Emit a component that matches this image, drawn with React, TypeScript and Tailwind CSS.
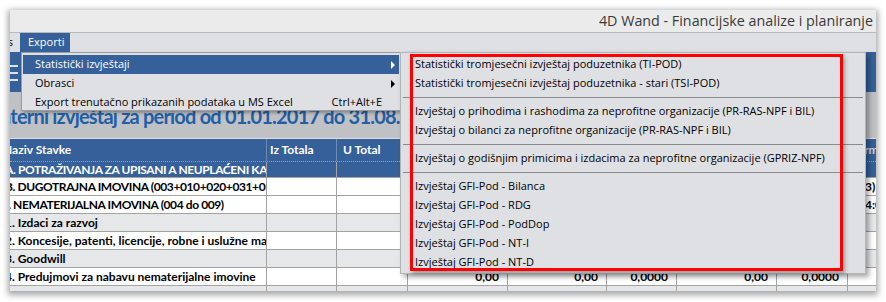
import React from 'react';

const subItems: (string | null)[] = [
  'Statistički tromjesečni izvještaj poduzetnika (TI-POD)',
  'Statistički tromjesečni izvještaj poduzetnika - stari (TSI-POD)',
  null,
  'Izvještaj o prihodima i rashodima za neprofitne organizacije (PR-RAS-NPF i BIL)',
  'Izvještaj o bilanci za neprofitne organizacije (PR-RAS-NPF i BIL)',
  null,
  'Izvještaj o godišnjim primicima i izdacima za neprofitne organizacije (GPRIZ-NPF)',
  null,
  'Izvještaj GFI-Pod - Bilanca',
  'Izvještaj GFI-Pod - RDG',
  'Izvještaj GFI-Pod - PodDop',
  'Izvještaj GFI-Pod - NT-I',
  'Izvještaj GFI-Pod - NT-D',
];

type Row = { name: string; bg: string; text: string; h: string; caps?: boolean; vals?: boolean; last?: string };

const rows: Row[] = [
  { name: 'A. POTRAŽIVANJA ZA UPISANI A NEUPLAĆENI KAPITAL', bg: 'bg-[#35609a]', text: 'text-white', h: 'h-[16px]', caps: true },
  { name: 'B. DUGOTRAJNA IMOVINA (003+010+020+031+036)', bg: 'bg-white', text: 'text-black', h: 'h-[18px]', caps: true, last: '3)' },
  { name: 'I. NEMATERIJALNA IMOVINA (004 do 009)', bg: 'bg-white', text: 'text-black', h: 'h-[18px]', caps: true, last: '4:009)' },
  { name: '1. Izdaci za razvoj', bg: 'bg-[#e6e7e9]', text: 'text-black', h: 'h-[18px]' },
  { name: '2. Koncesije, patenti, licencije, robne i uslužne marke', bg: 'bg-white', text: 'text-black', h: 'h-[18px]' },
  { name: '3. Goodwill', bg: 'bg-[#e6e7e9]', text: 'text-black', h: 'h-[18px]' },
  { name: '4. Predujmovi za nabavu nematerijalne imovine', bg: 'bg-white', text: 'text-black', h: 'h-[18px]', vals: true },
  { name: '', bg: 'bg-[#e6e7e9]', text: 'text-black', h: 'h-[18px]' },
];

const cols = 'grid grid-cols-[257px_70px_71px_100px_99px_70px_100px_71px_1fr]';
const vals = ['0,00', '0,00', '0,0000', '0,00', '0,0000'];

function Arrow({ color }: { color: string }) {
  return <span className={`w-0 h-0 border-y-[4px] border-y-transparent border-l-[4px] ${color}`} />;
}

export default function App() {
  return (
    <div className="w-[886px] h-[302px] bg-white pt-[10px] pl-[10px]">
      <div className="relative w-[866px] h-[281px] overflow-hidden bg-[#bfc1c4] shadow-[0_2px_6px_2px_rgba(0,0,0,0.35)] font-['Lato',sans-serif]">
        {/* title bar */}
        <div className="h-[23px] bg-[#ebebeb] border-b border-[#b9b9b9] flex items-center justify-end pr-[3px] font-['Open_Sans',sans-serif] text-[14.3px] text-[#3a3a3a]">
          4D Wand - Financijske analize i planiranje
        </div>

        {/* menu bar */}
        <div className="h-[19px] bg-[#dfe0e3] flex font-['Open_Sans',sans-serif] text-[11px]">
          <div className="w-[10px] flex justify-end items-center pr-[7px] text-black">s</div>
          <div className="w-[50px] bg-[#35609a] text-white flex items-center pl-[8px]">Exporti</div>
        </div>

        {/* toolbar */}
        <div className="h-[40px] bg-[#35609a] pt-[13px] flex flex-col gap-[5px]">
          <span className="block w-[8px] h-[2px] bg-[#dbe3ee]" />
          <span className="block w-[8px] h-[2px] bg-[#dbe3ee]" />
          <span className="block w-[8px] h-[2px] bg-[#dbe3ee]" />
        </div>

        {/* report title */}
        <div className="h-[46px] pt-[13px] whitespace-nowrap overflow-hidden">
          <div className="text-[20px] leading-[22px] font-bold tracking-[-0.8px] text-[#1f5fa6] -ml-[15px]">
            Interni izvještaj za period od 01.01.2017 do 31.08.2017
          </div>
        </div>

        {/* table */}
        <div className="border-t border-[#dcdde0] text-[12px] font-bold">
          <div className={`${cols} h-[23px] bg-[#35609a] text-white border-b border-dotted border-[#d8923a]`}>
            <div className="border-r border-[#6d8cb5] flex items-center overflow-hidden"><span className="-ml-[7px]">Naziv Stavke</span></div>
            <div className="border-r border-[#6d8cb5] flex items-center pl-[3px]">Iz Totala</div>
            <div className="border-r border-[#6d8cb5] flex items-center pl-[6px]">U Total</div>
            <div className="border-r border-[#6d8cb5]" />
            <div className="border-r border-[#6d8cb5]" />
            <div className="border-r border-[#6d8cb5]" />
            <div className="border-r border-[#6d8cb5]" />
            <div className="border-r border-[#6d8cb5]" />
            <div className="flex items-center pl-[3px] text-[#cfd3da] overflow-hidden whitespace-nowrap">Formula</div>
          </div>
          {rows.map((r, i) => (
            <div key={i} className={`${cols} ${r.h} ${r.bg} ${r.text} border-b border-[#a3a3a3]`}>
              <div className="border-r border-[#a3a3a3] flex items-center overflow-hidden whitespace-nowrap">
                <span className={r.caps ? '-ml-[5px] tracking-[-0.4px]' : '-ml-[5px]'}>{r.name}</span>
              </div>
              <div className="border-r border-[#a3a3a3]" />
              <div className="border-r border-[#a3a3a3]" />
              {[0, 1, 2, 3, 4].map((j) => (
                <div key={j} className="border-r border-[#a3a3a3] flex items-center justify-end pr-[8px]">
                  {r.vals ? vals[j] : ''}
                </div>
              ))}
              <div className="flex items-center pl-[17px] overflow-hidden whitespace-nowrap">{r.last ?? ''}</div>
            </div>
          ))}
        </div>

        {/* Exporti dropdown */}
        <div className="absolute left-[11px] top-[42px] w-[380px] h-[59px] bg-[#dfe0e4] border border-[#9c9c9c] shadow-[2px_2px_3px_rgba(0,0,0,0.3)] pt-[2px] px-[1px] font-['Open_Sans',sans-serif] text-[11px] text-black">
          <div className="h-[19px] bg-[#35609a] text-white flex items-center justify-between pl-[12px] pr-[4px]">
            <span>Statistički izvještaji</span>
            <Arrow color="border-l-white" />
          </div>
          <div className="h-[19px] flex items-center justify-between pl-[12px] pr-[4px]">
            <span>Obrasci</span>
            <Arrow color="border-l-black" />
          </div>
          <div className="h-[18px] flex items-center justify-between pl-[12px] pr-[17px]">
            <span>Export trenutačno prikazanih podataka u MS Excel</span>
            <span>Ctrl+Alt+E</span>
          </div>
        </div>

        {/* submenu */}
        <div className="absolute left-[390px] top-[42px] w-[466px] h-[222px] bg-[#dfe0e4] border border-[#b4b4b4] shadow-[3px_3px_5px_rgba(0,0,0,0.35)] pt-[2px] font-['Open_Sans',sans-serif] text-[11px] text-black">
          {subItems.map((s, i) =>
            s === null ? (
              <div key={i} className="h-[9px] flex items-center px-[2px]">
                <div className="h-px w-full bg-[#8a8a8a]" />
              </div>
            ) : (
              <div key={i} className="h-[19px] flex items-center pl-[14px] whitespace-nowrap">{s}</div>
            )
          )}
          <div className="absolute left-[9px] top-[1px] w-[433px] h-[217px] border-[3px] border-[#ff0000] shadow-[2px_3px_4px_rgba(0,0,0,0.3)]" />
        </div>
      </div>
    </div>
  );
}
